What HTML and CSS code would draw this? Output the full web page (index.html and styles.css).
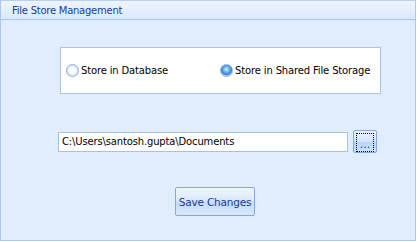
FILE: index.html
```html
<!DOCTYPE html>
<html lang="en">
<head>
  <meta charset="UTF-8">
  <title>File Store Management</title>
  <link rel="stylesheet" href="styles.css">
</head>
<body>
  <div class="panel">
    <!-- Header -->
    <div class="panel-header">File Store Management</div>

    <div class="panel-body">
      <!-- Storage options -->
      <div class="option-box">
        <label class="radio"><span class="radio-dot"></span>Store in Database</label>
        <label class="radio"><span class="radio-dot checked"></span>Store in Shared File Storage</label>
      </div>

      <!-- Path row -->
      <div class="path-row">
        <div class="path-input">C:\Users\santosh.gupta\Documents</div>
        <button class="browse-btn"><span class="focus-rect">...</span></button>
      </div>

      <!-- Save -->
      <div class="save-row">
        <button class="save-btn">Save Changes</button>
      </div>
    </div>
  </div>
</body>
</html>
```

FILE: styles.css
```css
/* Page */
body {
  margin: 0;
  background: #ffffff;
  font-family: 'DejaVu Sans', 'Liberation Sans', sans-serif;
  font-size: 10px;
  letter-spacing: -0.15px;
}

/* Outer panel */
.panel {
  width: 414px;
  height: 239px;
  border: 1px solid #a9c8ee;
  border-top-color: #b7d2f3;
  background: #e2edfc;
  display: flex;
  flex-direction: column;
}

.panel-header {
  height: 18px;
  line-height: 19px;
  padding-left: 11px;
  color: #1a3c94;
  letter-spacing: -0.25px;
  background: linear-gradient(to bottom, #eff5fe 0%, #e6effc 50%, #d9e7fa 100%);
  border-bottom: 1px solid #a7c6ee;
}

.panel-body {
  flex: 1;
  display: flex;
  flex-direction: column;
  padding: 27px 0 0 57px;
}

/* Radio group */
.option-box {
  width: 314px;
  height: 45px;
  margin-left: 2px;
  background: #ffffff;
  border: 1px solid #a8c4e8;
  display: flex;
  align-items: center;
  padding-left: 5px;
}

.radio {
  display: flex;
  align-items: center;
  gap: 2px;
  white-space: nowrap;
  color: #000;
}

.radio + .radio {
  margin-left: 52px;
}

.radio-dot {
  width: 11px;
  height: 11px;
  border-radius: 50%;
  border: 1px solid #8fb0d8;
  background: radial-gradient(circle at 50% 50%, #ffffff 35%, #c9dbf2 75%, #a9c3e6 100%);
}

.radio-dot.checked {
  background: radial-gradient(circle at 50% 40%, #d7f0ff 0%, #5aa6ec 40%, #3a7fd2 60%, #b9d4f3 75%, #e4eefb 100%);
}

/* Path row */
.path-row {
  display: flex;
  align-items: center;
  margin-top: 36px;
  gap: 5px;
}

.path-input {
  width: 285px;
  height: 18px;
  line-height: 18px;
  padding-left: 3px;
  background: #ffffff;
  border: 1px solid #a4c2e6;
  color: #000;
}

.browse-btn {
  width: 24px;
  height: 23px;
  padding: 2px;
  border: 1px solid #7fa9e0;
  border-radius: 2px;
  background: linear-gradient(to bottom, #eaf3fe 0%, #d2e4fa 50%, #b8d4f6 55%, #cfe3fb 100%);
  font-family: inherit;
  font-size: 11px;
}

.focus-rect {
  display: flex;
  align-items: flex-end;
  justify-content: center;
  height: 100%;
  border: 1px dotted #000;
  line-height: 12px;
  color: #1a3c94;
}

/* Save button */
.save-row {
  display: flex;
  margin-top: 34px;
  padding-left: 117px;
}

.save-btn {
  width: 80px;
  height: 29px;
  border: 1px solid #7fa9e0;
  border-radius: 2px;
  background: linear-gradient(to bottom, #eef5fe 0%, #dce9fb 45%, #c4dbf8 55%, #d8e8fc 100%);
  color: #1a3c94;
  font-family: inherit;
  font-size: 10.5px;
  letter-spacing: -0.2px;
  padding: 0;
}
```
